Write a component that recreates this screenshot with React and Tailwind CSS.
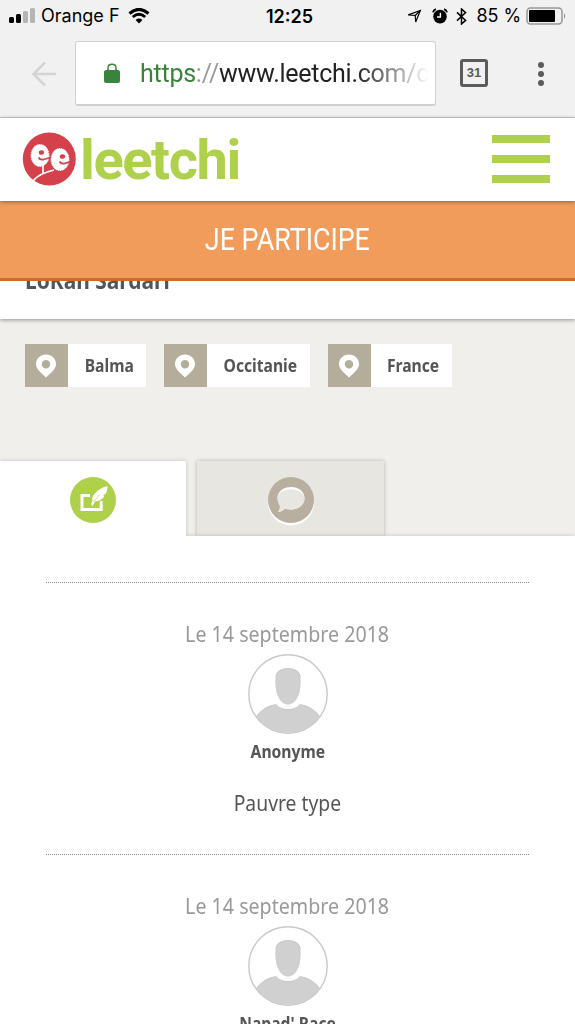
import React from 'react';

const StatusBar = () => (
  <div className="flex h-8 items-center justify-between px-2 font-['Inter','Liberation_Sans',sans-serif] text-black">
    <div className="flex w-[180px] items-center">
      <svg width="27" height="16" viewBox="0 0 27 16">
        <rect x="1" y="9" width="5" height="6" rx="1.5" fill="#000" />
        <rect x="8" y="6" width="5" height="9" rx="1.5" fill="#000" />
        <rect x="15" y="3" width="5" height="12" rx="1.5" fill="#b5b5b5" />
        <rect x="22" y="0" width="5" height="15" rx="1.5" fill="#b5b5b5" />
      </svg>
      <span className="ml-1.5 text-[18px] leading-6 whitespace-nowrap">Orange F</span>
      <svg className="ml-2 shrink-0" width="22" height="16" viewBox="0 0 22 16" fill="none" stroke="#000">
        <path d="M1.5 5.5 Q11 -2.8 20.5 5.5" strokeWidth="3" />
        <path d="M4.8 9 Q11 3.6 17.2 9" strokeWidth="2.8" />
        <path d="M11 15.5 L7.6 12 Q11 9.2 14.4 12 Z" fill="#000" stroke="none" />
      </svg>
    </div>
    <div className="pl-1 text-[18px] font-semibold">12:25</div>
    <div className="flex w-[180px] items-center justify-end">
      <svg className="shrink-0" width="15" height="15" viewBox="0 0 15 15" fill="none" stroke="#000" strokeWidth="1.2">
        <path d="M1.2 5.9 L13.3 1.5 L8.7 13 L8.2 6.5 Z" />
        <path d="M13.3 1.5 L8.2 6.5" />
      </svg>
      <svg className="ml-2.5 shrink-0" width="16" height="16" viewBox="0 0 16 16">
        <circle cx="8" cy="8.6" r="6.8" fill="#000" />
        <path d="M1 4.3 Q1.4 2 4 1.2 M15 4.3 Q14.6 2 12 1.2" fill="none" stroke="#000" strokeWidth="1.8" />
        <path d="M8.4 4.8 V9 H5" fill="none" stroke="#fff" strokeWidth="1.4" />
      </svg>
      <svg className="ml-2 shrink-0" width="11" height="17" viewBox="0 0 11 17" fill="none" stroke="#000" strokeWidth="1.5">
        <path d="M1 4.4 L9.6 12.4 L5.5 16 V1 L9.6 4.6 L1 12.6" />
      </svg>
      <span className="ml-2.5 text-[18px] leading-6 tracking-[-0.1px] whitespace-nowrap">85 %</span>
      <svg className="ml-[5px] shrink-0" width="41" height="18" viewBox="0 0 41 18">
        <rect x="1" y="1" width="35" height="16" rx="3.5" fill="none" stroke="#969696" strokeWidth="1.5" />
        <rect x="3" y="3" width="26" height="12" rx="1" fill="#000" />
        <path d="M38 6 Q40.5 9 38 12 Z" fill="#969696" />
      </svg>
    </div>
  </div>
);

const BrowserBar = () => (
  <div className="flex h-[86px] items-start border-b border-[#cfcfcf] pt-[9px]">
    <div className="flex h-[65px] w-[75px] items-center pl-[31px]">
      <svg width="26" height="26" viewBox="0 0 26 26" fill="none" stroke="#d4d4d4" strokeWidth="2.6">
        <path d="M25 13 H3 M14 1.5 L2.5 13 L14 24.5" />
      </svg>
    </div>
    <div className="flex h-[65px] w-[361px] items-center rounded-[3px] border border-b-2 border-[#d0d0d0] bg-white">
      <svg className="ml-7 shrink-0" width="16" height="21" viewBox="0 0 16 21">
        <rect x="0" y="7" width="16" height="13" rx="2" fill="#39833c" />
        <path d="M4 8 V5 Q4 1.3 8 1.3 Q12 1.3 12 5 V8" fill="none" stroke="#39833c" strokeWidth="1.5" />
      </svg>
      <div className="mt-px ml-5 w-[289px] overflow-hidden mask-r-from-75% mask-r-to-100% font-[Roboto,sans-serif] text-[25px] leading-8 tracking-[-0.25px] whitespace-nowrap text-[#222]">
        <span className="text-[#39833c]">https</span>
        <span className="text-[#999]">://</span>
        www.leetchi.com/c
      </div>
    </div>
    <div className="mt-[18px] ml-6 flex h-7 w-7 items-center justify-center rounded-[3px] border-[3px] border-[#5b5b5b] font-['Liberation_Sans',sans-serif] text-[13px] font-bold text-[#5b5b5b]">
      31
    </div>
    <div className="mt-[21px] ml-[50px] flex flex-col gap-[3px]">
      <span className="size-1.5 rounded-full bg-[#5b5b5b]" />
      <span className="size-1.5 rounded-full bg-[#5b5b5b]" />
      <span className="size-1.5 rounded-full bg-[#5b5b5b]" />
    </div>
  </div>
);

const LogoMark = () => (
  <svg className="shrink-0" width="54" height="54" viewBox="0 0 54 54">
    <circle cx="27.3" cy="27" r="26.5" fill="#d5414a" />
    <ellipse cx="18" cy="23.5" rx="9" ry="11" fill="#fff" stroke="#fff" strokeDasharray="1.4 1" />
    <ellipse cx="38" cy="27.5" rx="9" ry="11" fill="#fff" stroke="#fff" strokeDasharray="1.4 1" />
    <ellipse cx="19.5" cy="20.5" rx="2.7" ry="2.2" fill="#d5414a" transform="rotate(-15 19.5 20.5)" />
    <ellipse cx="40.5" cy="24.5" rx="2.7" ry="2.2" fill="#d5414a" transform="rotate(-15 40.5 24.5)" />
    <path d="M16.5 25.5 Q18 28.3 21.5 27.5 Q25 26.5 28.5 25.5" fill="none" stroke="#d5414a" strokeWidth="1.8" />
    <path d="M37.5 29.5 Q39 32.3 42.5 31.5 Q45 30.5 48.5 30" fill="none" stroke="#d5414a" strokeWidth="1.8" />
    <path d="M11.5 48.5 Q17 41.5 32 38 M21 33 V42" fill="none" stroke="#fff" strokeWidth="1.7" />
  </svg>
);

const SiteHeader = () => (
  <header className="relative z-20 flex h-[83px] items-center justify-between bg-white pr-[25px] pb-0.5 pl-[22px] shadow-[0_1px_4px_rgba(60,60,60,0.6)]">
    <div className="flex items-center">
      <LogoMark />
      <span className="mt-0.5 ml-1 font-[Roboto,sans-serif] text-[56px] leading-[60px] font-bold tracking-[-1.4px] text-[#aed04b]">
        leetchi
      </span>
    </div>
    <div className="flex flex-col gap-3">
      <span className="h-2 w-[58px] bg-[#aed04b]" />
      <span className="h-2 w-[58px] bg-[#aed04b]" />
      <span className="h-2 w-[58px] bg-[#aed04b]" />
    </div>
  </header>
);

const places = [
  { name: 'Balma', width: 'w-[121px]' },
  { name: 'Occitanie', width: 'w-[146px]' },
  { name: 'France', width: 'w-[124px]' },
];

const Place = ({ name, width }) => (
  <div className={`flex h-[43px] bg-white ${width}`}>
    <div className="flex w-[43px] shrink-0 items-center justify-center bg-[#b5ad9b] pr-px">
      <svg width="20" height="24" viewBox="0 0 20 24">
        <path fillRule="evenodd" fill="#fff" d="M10 0.5 C15.5 0.5 20 4.5 20 10 C20 15.5 14 19.5 10 23.5 C6 19.5 0 15.5 0 10 C0 4.5 4.5 0.5 10 0.5 Z M10 6 A4.2 4.2 0 1 0 10 14.4 A4.2 4.2 0 1 0 10 6 Z" />
      </svg>
    </div>
    <div className="flex flex-1 items-center justify-center pl-1">
      <span className="scale-x-[0.87] text-[18px] font-bold text-[#555]">{name}</span>
    </div>
  </div>
);

const Tabs = () => (
  <div className="mt-[74px] flex h-[75px] gap-[11px]">
    <div className="flex w-[186px] justify-center bg-white pt-4 shadow-[0_0_4px_rgba(0,0,0,0.2)]">
      <svg width="46" height="46" viewBox="0 0 46 46">
        <circle cx="23" cy="23" r="23" fill="#aed04b" />
        <path d="M20 18.5 H12 V32.5 H31.2 V24" fill="none" stroke="#fff" strokeWidth="3" />
        <path d="M22 29 Q20.5 27 22.5 24 Q21 20 25 16.5 Q29 11 37.5 9 Q37.5 14 35.5 17 L33 18 L34.5 19 Q31.5 24 25 24.5 L22.5 29 Z" fill="#fff" />
        <path d="M23.5 25 L29 18" stroke="#aed04b" strokeWidth="0.6" />
      </svg>
    </div>
    <div className="flex w-[187px] justify-center bg-[#e7e6e1] pt-4 shadow-[0_0_4px_rgba(0,0,0,0.25)]">
      <svg width="46" height="49" viewBox="0 0 46 49">
        <circle cx="23" cy="25.5" r="23" fill="#fff" />
        <circle cx="23" cy="23" r="23" fill="#b8afa1" />
        <path d="M23 10 C30.5 10 36.5 14.5 36.5 21 C36.5 28 30 32.5 23 32.5 Q19.5 32.5 17 31.5 Q14.5 34.5 10 35 Q12.5 32 11.8 28.5 Q9.5 25 9.5 21 C9.5 14.5 15.5 10 23 10 Z" fill="#fff" />
        <path d="M23 12.3 C30 12.3 36.5 16 36.5 22 C36.5 28 30 32.5 23 32.5 Q19.5 32.5 17 31.5 Q14.5 34.5 10 35 Q12.5 32 11.8 28.5 Q9.5 25 9.5 22 C9.5 16 15.5 12.3 23 12.3 Z" fill="#e7e6e1" />
      </svg>
    </div>
  </div>
);

const Avatar = () => (
  <svg className="mt-[5px]" width="80" height="80" viewBox="0 0 80 80">
    <circle cx="40" cy="40" r="39.2" fill="#fff" stroke="#c9c9c9" strokeWidth="1.4" />
    <path d="M40 14.5 C48.5 14.5 52.7 17.5 52.7 27 C52.7 40 48 50.5 40 50.5 C32 50.5 27.3 40 27.3 27 C27.3 17.5 31.5 14.5 40 14.5 Z" fill="#d0d0d0" />
    <path d="M28 50.5 Q32 55.5 40 55.5 Q48 55.5 52 50.5 Q64 52 71.8 62.5 A39 39 0 0 1 8.2 62.5 Q16 52 28 50.5 Z" fill="#d0d0d0" />
    <path d="M8.2 62.5 Q16 52 28 50.5 Q32 55.5 40 55.5 Q48 55.5 52 50.5 Q64 52 71.8 62.5 M27.6 23 Q29 14.5 40 14.5 Q51 14.5 52.4 23" fill="none" stroke="#c2c2c2" strokeWidth="0.8" />
  </svg>
);

const comments = [
  { date: 'Le 14 septembre 2018', author: 'Anonyme', message: 'Pauvre type' },
  { date: 'Le 14 septembre 2018', author: "Napad' Race", message: '' },
];

const Comment = ({ date, author, message }) => (
  <article className="mx-[46px] flex h-[272px] flex-col items-center border-t border-dotted border-[#888] pt-9">
    <div className="scale-x-[0.935] text-[21px] leading-[30px] whitespace-nowrap text-[#999]">{date}</div>
    <Avatar />
    <div className="mt-1 scale-x-[0.87] text-[18px] leading-[26px] font-bold text-[#555]">{author}</div>
    <p className="mt-6 scale-x-[0.92] text-[21px] leading-[30px] text-[#555]">{message}</p>
  </article>
);

export default function App() {
  return (
    <div className="h-[1024px] w-[575px] overflow-hidden bg-[#f0efeb] font-['Noto_Sans',sans-serif]">
      <div className="bg-[#f1f1f1]">
        <StatusBar />
        <BrowserBar />
      </div>
      <SiteHeader />
      <button className="relative z-10 flex h-20 w-full items-center justify-center border-b-[3px] border-[#d06b30] bg-[#f29c5c] pt-0.5 font-[Roboto,sans-serif] text-[31px] text-white">
        <span className="scale-x-[0.865]">JE PARTICIPE</span>
      </button>
      <div className="flex h-[38px] items-start bg-white pl-[25px] shadow-[0_1px_4px_rgba(0,0,0,0.4)]">
        <div className="-mt-4 origin-left scale-x-[0.91] text-[23px] leading-[30px] font-bold text-[#555]">LoKan Sardari</div>
      </div>
      <div className="flex gap-[18px] px-[25px] pt-[25px]">
        {places.map((place) => (
          <Place key={place.name} {...place} />
        ))}
      </div>
      <Tabs />
      <main className="relative h-[490px] bg-white shadow-[0_0_4px_rgba(0,0,0,0.2)]">
        {/* hides the panel's shadow under the active tab */}
        <div className="absolute -top-1.5 left-0 h-3 w-[186px] bg-white" />
        <div className="pt-[46px]">
          {comments.map((c) => (
            <Comment key={c.author} {...c} />
          ))}
        </div>
      </main>
    </div>
  );
}
